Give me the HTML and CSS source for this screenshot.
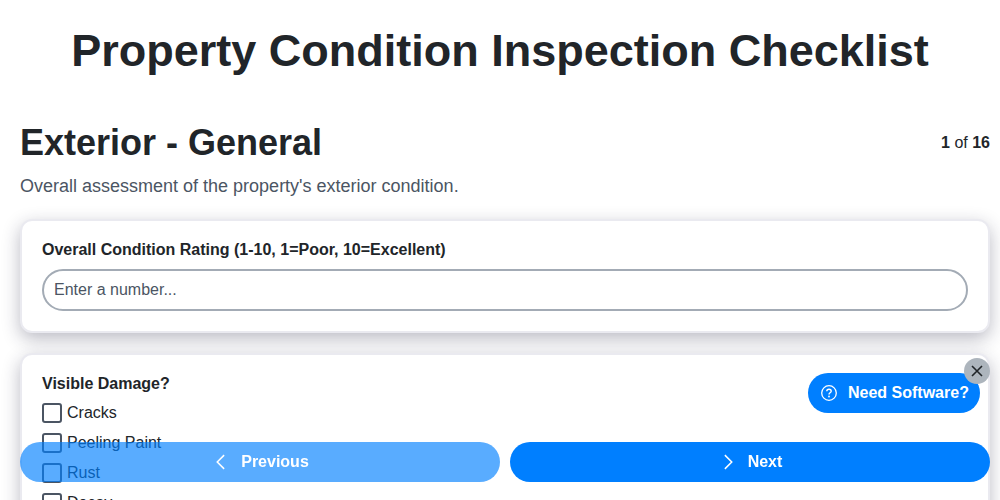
FILE: index.html
```html
<!DOCTYPE html>
<html lang="en">
<head>
<meta charset="utf-8">
<title>Property Condition Inspection Checklist</title>
<link rel="stylesheet" href="styles.css">
</head>
<body>
<main class="page">
  <h1 class="title">Property Condition Inspection Checklist</h1>
  <div class="content">
    <header class="section-head">
      <h2 class="section-title">Exterior - General</h2>
      <div class="progress"><b>1</b> of <b>16</b></div>
    </header>
    <p class="section-desc">Overall assessment of the property's exterior condition.</p>
    <section class="card">
      <label class="field-label" for="rating">Overall Condition Rating (1-10, 1=Poor, 10=Excellent)</label>
      <input class="text-input" id="rating" type="text" placeholder="Enter a number...">
    </section>
    <section class="card card-check">
      <div class="field-label">Visible Damage?</div>
      <div class="options">
        <label class="option"><span class="box"></span>Cracks</label>
        <label class="option"><span class="box"></span>Peeling Paint</label>
        <label class="option"><span class="box"></span>Rust</label>
        <label class="option"><span class="box"></span>Decay</label>
      </div>
    </section>
  </div>
</main>
<nav class="nav">
  <button class="nav-btn nav-prev" type="button">
    <svg class="chev" viewBox="0 0 16 16" width="20" height="20" aria-hidden="true"><path d="M10.500 2.500 5 8l5.500 5.500" fill="none" stroke="currentColor" stroke-width="1.200"/></svg>
    Previous
  </button>
  <button class="nav-btn" type="button">
    <svg class="chev" viewBox="0 0 16 16" width="20" height="20" aria-hidden="true"><path d="M5.500 2.500 11 8l-5.500 5.500" fill="none" stroke="currentColor" stroke-width="1.200"/></svg>
    Next
  </button>
</nav>
<button class="help" type="button">
  <svg viewBox="0 0 16 16" width="16" height="16" aria-hidden="true"><circle cx="8" cy="8" r="7.300" fill="none" stroke="currentColor" stroke-width="1.300"/><path d="M5.800 6.200C5.800 5 6.800 4.300 8 4.300s2.200.8 2.200 1.900c0 1.600-2.200 1.600-2.200 3.200" fill="none" stroke="currentColor" stroke-width="1.400"/><circle cx="8" cy="11.500" r=".9" fill="currentColor"/></svg>
  Need Software?
</button>
<button class="close" type="button" aria-label="Close">
  <svg viewBox="0 0 16 16" width="16" height="16" aria-hidden="true"><path d="M3 3l10 10M13 3 3 13" fill="none" stroke="currentColor" stroke-width="1.600"/></svg>
</button>
</body>
</html>
```
FILE: styles.css
```css
* { box-sizing: border-box; }
html, body { margin: 0; height: 100%; overflow: hidden; background: #fff; }
body { font-family: "Liberation Sans", Arial, sans-serif; color: #212529; }
.page { padding: 21px 10px 0; }
.content { padding-left: 10px; }
.title { margin: 0 0 40px; font-size: 45px; line-height: 60px; font-weight: 700; text-align: center; }
.section-head { display: flex; justify-content: space-between; align-items: flex-start; }
.section-title { margin: 0; font-size: 36px; line-height: 44px; font-weight: 700; }
.progress { font-size: 16px; line-height: 20px; margin-top: 12px; }
.section-desc { margin: 10px 0 22px; font-size: 18px; line-height: 22px; color: #4b5563; }
.card { background: #fff; border: 2px solid #eaeaf0; border-radius: 12px; padding: 19px 20px 20px; margin-bottom: 20px; box-shadow: 0 6px 18px rgba(30, 30, 60, .3); }
.field-label { display: block; font-size: 16px; line-height: 20px; font-weight: 700; margin-bottom: 9px; }
.card-check .field-label { margin-bottom: 4px; }
.text-input { display: block; width: 100%; height: 42px; padding: 0 10px; border: 2px solid #a3abb5; border-radius: 21px; background: #fff; font: 16px "Liberation Sans", Arial, sans-serif; color: #212529; outline: 0; }
.text-input::placeholder { color: #4b5563; opacity: 1; }
.options { display: flex; flex-direction: column; }
.option { display: flex; align-items: center; gap: 5px; height: 30px; font-size: 16px; }
.box { width: 20px; height: 20px; border: 2px solid #4b5563; border-radius: 3px; background: #fff; }
.nav { position: fixed; left: 20px; right: 10px; bottom: 18px; display: flex; gap: 10px; }
.nav-btn { flex: 1; height: 40px; display: flex; align-items: center; justify-content: center; gap: 10px; border: 0; border-radius: 20px; background: #007fff; color: #fff; font: 700 16px "Liberation Sans", Arial, sans-serif; }
.nav-prev { background: rgba(0, 127, 255, .65); }
.chev { display: block; }
.help { position: fixed; left: 808px; top: 373px; width: 172px; height: 40px; display: flex; align-items: center; gap: 11px; padding: 0 0 0 13px; border: 0; border-radius: 20px; background: #007fff; color: #fff; font: 700 16px "Liberation Sans", Arial, sans-serif; }
.close { position: fixed; left: 964px; top: 358px; width: 26px; height: 26px; display: flex; align-items: center; justify-content: center; padding: 0; border: 0; border-radius: 50%; background: #adb5bd; color: #212529; }
```
